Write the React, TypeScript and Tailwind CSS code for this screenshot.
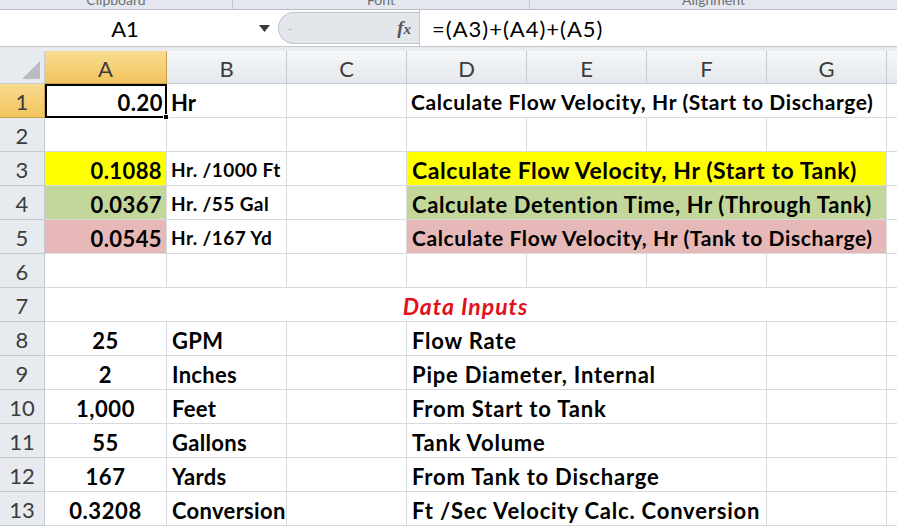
import React from 'react';

const font = { fontFamily: 'Lato, "Open Sans", sans-serif' };

const cols = ['A', 'B', 'C', 'D', 'E', 'F', 'G'];

const cell = 'border-r border-b border-[#d8dadd] h-[34px] flex items-center pt-[3px] overflow-visible whitespace-nowrap';

const RowHead = ({ n, active }: { n: number; active?: boolean }) => (
  <div
    className={`h-[34px] border-r border-b flex items-center justify-center pt-[2px] text-[22px] text-[#3c3c3c] ${
      active
        ? 'bg-gradient-to-b from-[#f9dc8f] to-[#f1c35c] border-[#c9a24e]'
        : 'bg-[#e7ebf0] border-[#c5cbd3]'
    }`}
  >
    {n}
  </div>
);

const dataRows = [
  { n: 8, a: '25', b: 'GPM', d: 'Flow Rate' },
  { n: 9, a: '2', b: 'Inches', d: 'Pipe Diameter, Internal' },
  { n: 10, a: '1,000', b: 'Feet', d: 'From Start to Tank' },
  { n: 11, a: '55', b: 'Gallons', d: 'Tank Volume' },
  { n: 12, a: '167', b: 'Yards', d: 'From Tank to Discharge' },
  { n: 13, a: '0.3208', b: 'Conversion', d: 'Ft /Sec Velocity Calc. Conversion' },
];

const coloured = [
  { n: 3, bg: 'bg-[#ffff00]', a: '0.1088', b: 'Hr. /1000 Ft', d: 'Calculate Flow Velocity, Hr (Start to Tank)', dSize: 'text-[23px] tracking-[0.55px]' },
  { n: 4, bg: 'bg-[#c4d79b]', a: '0.0367', b: 'Hr. /55 Gal', d: 'Calculate Detention Time, Hr (Through Tank)', dSize: 'text-[22px] tracking-[0.6px]' },
  { n: 5, bg: 'bg-[#e6b8b7]', a: '0.0545', b: 'Hr. /167 Yd', d: 'Calculate Flow Velocity, Hr (Tank to Discharge)', dSize: 'text-[21px] tracking-[0.6px]' },
];

export default function App() {
  return (
    <div className="w-[897px] h-[529px] overflow-hidden bg-white text-black" style={font}>
      {/* ribbon group labels, cut off */}
      <div className="h-[10px] bg-[#e4e8ee] border-b border-[#b8bec7] flex overflow-hidden">
        <div className="w-[233px] border-r border-[#c3c8cf] flex justify-center">
          <span className="text-[14px] text-[#6b6f75] leading-none -mt-[7px]">Clipboard</span>
        </div>
        <div className="w-[297px] border-r border-[#c3c8cf] flex justify-center">
          <span className="text-[14px] text-[#6b6f75] leading-none -mt-[7px]">Font</span>
        </div>
        <div className="flex-1 flex justify-center">
          <span className="text-[14px] text-[#6b6f75] leading-none -mt-[7px]">Alignment</span>
        </div>
      </div>

      {/* formula bar */}
      <div className="h-[37px] flex items-stretch border-b border-[#c3c8cf] bg-white">
        <div className="w-[250px] flex items-center justify-center text-[22px] pl-[-2px]">A1</div>
        <div className="w-[28px] flex items-center justify-center">
          <svg width="11" height="7" viewBox="0 0 11 7">
            <path d="M0 0 H11 L5.5 7 Z" fill="#3a3a3a" />
          </svg>
        </div>
        <div className="w-[141px] my-[2px] rounded-l-full bg-[#e3e6ea] border border-r-0 border-[#bfc4cb] flex items-center justify-between pl-[9px] pr-[8px]">
          <span className="text-[10px] text-[#9aa0a6] leading-none">-</span>
          <span className="text-[19px] text-[#555] italic font-bold" style={{ fontFamily: '"Liberation Serif", serif' }}>
            f<span className="text-[15px]">x</span>
          </span>
        </div>
        <div className="flex-1 border-l border-[#c3c8cf] flex items-center pl-[12px] text-[22px] tracking-[1px]">=(A3)+(A4)+(A5)</div>
      </div>

      <div className="h-[4px] bg-[#e8ebef]" />

      {/* sheet */}
      <div className="grid grid-cols-[45px_122px_120px_120px_120px_120px_120px_120px_10px]">
        {/* header row */}
        <div className="h-[33px] bg-[#e7ebf0] border-r border-b border-[#c5cbd3] relative">
          <svg className="absolute right-[4px] bottom-[4px]" width="18" height="18" viewBox="0 0 18 18">
            <path d="M18 0 V18 H0 Z" fill="#b9bdc2" />
          </svg>
        </div>
        {cols.map((c) => (
          <div
            key={c}
            className={`h-[33px] border-r border-b flex items-center justify-center pt-[3px] text-[22px] text-[#3c3c3c] ${
              c === 'A'
                ? 'bg-gradient-to-b from-[#f9dc8f] to-[#f1c35c] border-[#c9a24e]'
                : 'bg-gradient-to-b from-[#f5f7f9] to-[#e4e8ec] border-[#c5cbd3]'
            }`}
          >
            {c}
          </div>
        ))}
        <div className="h-[33px] bg-gradient-to-b from-[#f5f7f9] to-[#e4e8ec] border-b border-[#c5cbd3]" />

        {/* row 1 */}
        <RowHead n={1} active />
        <div className="h-[34px] border-2 border-black flex items-center justify-end pt-[3px] pr-[2px] text-[22px] tracking-[0.5px] font-bold relative">
          0.20
          <div className="absolute -right-[4px] -bottom-[4px] w-[6px] h-[6px] bg-black border border-white" />
        </div>
        <div className={`${cell} pl-[4px] text-[22px] font-bold`}>Hr</div>
        <div className={cell} />
        <div className={`${cell} col-span-4 pl-[4px] text-[21px] tracking-[0.6px] font-bold`}>
          Calculate Flow Velocity, Hr (Start to Discharge)
        </div>
        <div className="border-b border-[#d8dadd]" />

        {/* row 2 */}
        <RowHead n={2} />
        {cols.map((c) => (
          <div key={c} className={cell} />
        ))}
        <div className="border-b border-[#d8dadd]" />

        {coloured.map((r) => (
          <React.Fragment key={r.n}>
            <RowHead n={r.n} />
            <div className={`${cell} ${r.bg} justify-end pr-[4px] text-[22px] tracking-[0.4px] font-bold`}>{r.a}</div>
            <div className={`${cell} pl-[4px] text-[19px] tracking-[0.4px] font-bold`}>{r.b}</div>
            <div className={cell} />
            <div className={`${cell} ${r.bg} col-span-4 pl-[5px] ${r.dSize} font-bold`}>{r.d}</div>
            <div className="border-b border-[#d8dadd]" />
          </React.Fragment>
        ))}

        {/* row 6 */}
        <RowHead n={6} />
        {cols.map((c) => (
          <div key={c} className={cell} />
        ))}
        <div className="border-b border-[#d8dadd]" />

        {/* row 7 */}
        <RowHead n={7} />
        <div className={`${cell} col-span-7 justify-center text-[23px] tracking-[1px] font-bold italic text-[#e3101a]`}>Data Inputs</div>
        <div className="border-b border-[#d8dadd]" />

        {dataRows.map((r) => (
          <React.Fragment key={r.n}>
            <RowHead n={r.n} />
            <div className={`${cell} justify-center text-[22px] tracking-[0.6px] font-bold`}>{r.a}</div>
            <div className={`${cell} pl-[5px] text-[22px] tracking-[0.3px] font-bold`}>{r.b}</div>
            <div className={cell} />
            <div className={`${cell} col-span-3 pl-[5px] text-[22px] tracking-[0.8px] font-bold`}>{r.d}</div>
            <div className={cell} />
            <div className="border-b border-[#d8dadd]" />
          </React.Fragment>
        ))}
      </div>
    </div>
  );
}
